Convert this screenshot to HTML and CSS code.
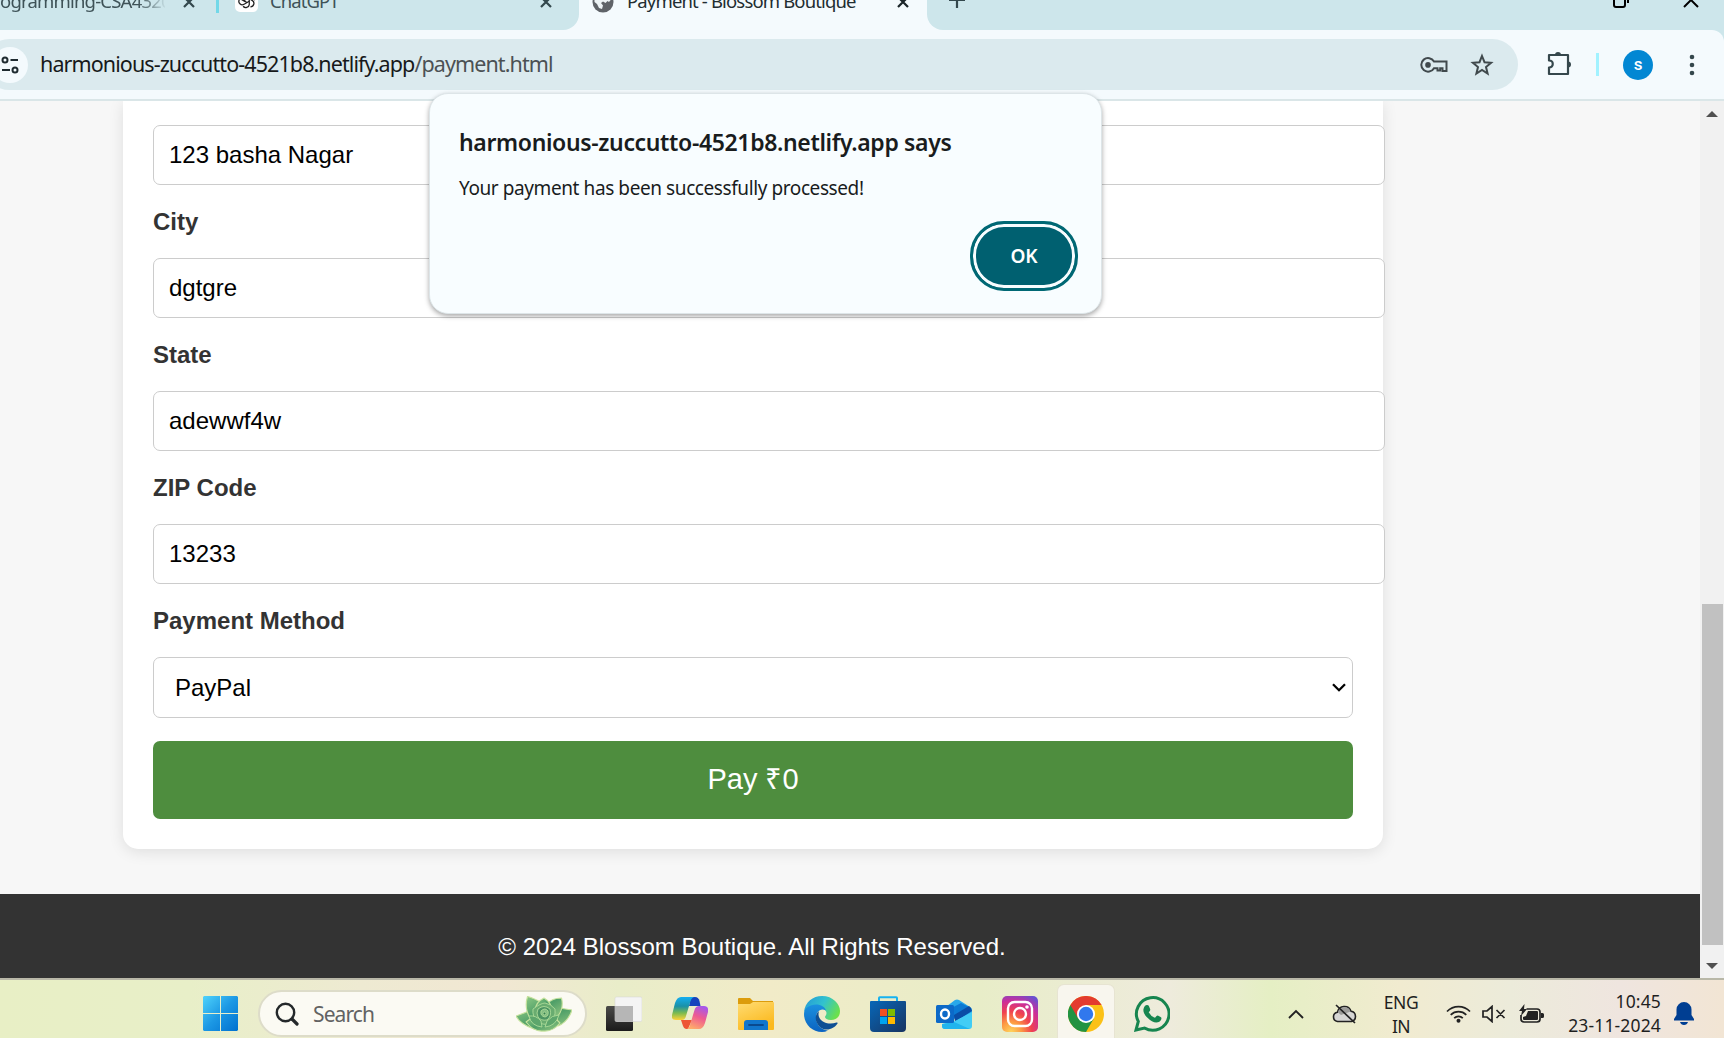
FILE: index.html
```html
<!DOCTYPE html>
<html lang="en">
<head>
<meta charset="utf-8">
<title>Payment - Blossom Boutique</title>
<link rel="stylesheet" href="styles.css">
</head>
<body>
<div class="screen">
  <div class="tabstrip">
    <div class="tabs-left">
      <span class="tab-text tab-fade t1">ogramming-CSA4320(</span>
      <svg class="x x1" width="12" height="12" viewBox="0 0 12 12"><path d="M1 1l10 10M11 1L1 11"/></svg>
      <span class="tab-sep"></span>
      <span class="gpt"><svg width="18" height="18" viewBox="0 0 24 24"><g fill="none" stroke="#222" stroke-width="1.700"><path id="petal" d="M9 13.700V5.800a4.600 4.600 0 0 1 8.600-2.300M9 10.300l6.800-4a4.600 4.600 0 0 1 6 6"/><use href="#petal" transform="rotate(120 12 12)"/><use href="#petal" transform="rotate(240 12 12)"/></g></svg></span>
      <span class="tab-text t2">ChatGPT</span>
      <svg class="x x2" width="12" height="12" viewBox="0 0 12 12"><path d="M1 1l10 10M11 1L1 11"/></svg>
    </div>
    <div class="tab-active">
      <svg width="22" height="22" viewBox="0 0 22 22"><circle cx="11" cy="11" r="10.500" fill="#5f6368"/><path d="M11 4h7.500l1 4-2.500 3-1.500-1-2 2-2.500-1.500L9 12l2 2.500-1 3.500-3-1-2-4-2.500-2V8l3.500-4z" fill="#edf3f5"/></svg>
      <span class="tab-text t3">Payment - Blossom Boutique</span>
      <svg class="x x3" width="12" height="12" viewBox="0 0 12 12"><path d="M1 1l10 10M11 1L1 11"/></svg>
    </div>
    <div class="tabs-right">
      <svg class="plus" width="16" height="16" viewBox="0 0 16 16"><path d="M8 0v16M0 8h16"/></svg>
      <svg class="restore" width="16" height="16" viewBox="0 0 16 16"><rect x="1" y="4" width="11" height="11" rx="2"/><path d="M4 1h8a3 3 0 0 1 3 3v7"/></svg>
      <svg class="winclose" width="16" height="16" viewBox="0 0 16 16"><path d="M1 1l14 14M15 1L1 15"/></svg>
    </div>
  </div>

  <div class="toolbar-wrap"><div class="toolbar">
    <div class="omnibox">
      <span class="siteinfo"><svg width="18" height="18" viewBox="0 0 18 18" fill="none" stroke="#1f2b30" stroke-width="2"><circle cx="4" cy="4" r="2.500"/><path d="M9.500 4H17M1 14h8"/><circle cx="14" cy="14" r="2.500"/></svg></span>
      <span class="url">harmonious-zuccutto-4521b8.netlify.app<span class="path">/payment.html</span></span>
      <svg class="key" width="28" height="18" viewBox="0 0 28 18" fill="none" stroke="#40494c" stroke-width="2"><path d="M14 5.500A6.800 6.800 0 1 0 14 12.200H17.500V14.500H20.200V12.200H22.500V15H26.500V5.500z"/><circle cx="8" cy="8.900" r="2.800" fill="#40494c" stroke="none"/></svg>
      <svg class="star" width="24" height="24" viewBox="0 0 24 24"><path d="M12 3l2.500 6.200 6.600.5-5.100 4.300 1.600 6.500L12 17l-5.600 3.500L8 14 2.900 9.700l6.600-.5z" fill="none" stroke="#40494c" stroke-width="2"/></svg>
    </div>
    <svg class="puzzle" width="25" height="25" viewBox="0 0 25 25"><path d="M2 4h19v19H2v-6.500c5 0 5-7 0-7z" fill="none" stroke="#35474c" stroke-width="2.200" stroke-linejoin="round"/><path d="M8 4a3 3 0 0 1 6 0zM21 10.500a3 3 0 0 1 0 6z" fill="#35474c"/></svg>
    <span class="tool-sep"></span>
    <span class="avatar">s</span>
    <svg class="dots" width="6" height="22" viewBox="0 0 6 22" fill="#35474c"><circle cx="3" cy="3" r="2.300"/><circle cx="3" cy="11" r="2.300"/><circle cx="3" cy="19" r="2.300"/></svg>
  </div></div>

  <div class="viewport">
    <div class="page">
      <main class="card">
        <div class="field">123 basha Nagar</div>
        <div class="label">City</div>
        <div class="field">dgtgre</div>
        <div class="label">State</div>
        <div class="field">adewwf4w</div>
        <div class="label">ZIP Code</div>
        <div class="field">13233</div>
        <div class="label">Payment Method</div>
        <div class="select">PayPal<svg width="14" height="9" viewBox="0 0 14 9"><path d="M1 1.200l6 6 6-6" fill="none" stroke="#000" stroke-width="2.300"/></svg></div>
        <div class="pay">Pay ₹0</div>
      </main>
      <footer class="footer">© 2024 Blossom Boutique. All Rights Reserved.</footer>
    </div>
    <div class="scrollbar">
      <svg width="12" height="6" viewBox="0 0 12 6"><path d="M0 6l6-6 6 6z"/></svg>
      <span class="thumb"></span>
      <svg class="down" width="12" height="6" viewBox="0 0 12 6"><path d="M0 0l6 6 6-6z"/></svg>
    </div>
  </div>

  <div class="taskbar">
    <svg class="win" width="35" height="35" viewBox="0 0 35 35"><defs><linearGradient id="wg" x1="0" y1="0" x2="35" y2="35" gradientUnits="userSpaceOnUse"><stop offset="0" stop-color="#4fd3fb"/><stop offset=".5" stop-color="#1c98e4"/><stop offset="1" stop-color="#0070cf"/></linearGradient></defs><path fill="url(#wg)" d="M1 0h16v17H0V1zM18 0h16l1 1v16H18zM0 18h17v17H1l-1-1zM18 18h17v16l-1 1H18z"/></svg>
    <div class="search">
      <svg class="mag" width="24" height="24" viewBox="0 0 24 24" fill="none" stroke="#24282a"><circle cx="10.500" cy="10.500" r="8.700" stroke-width="2.400"/><path d="M17 17l5 5" stroke-width="3.200" stroke-linecap="round"/></svg>
      <span class="search-text">Search</span>
      <svg class="rose" width="56" height="36" viewBox="0 0 56 36"><defs><linearGradient id="lf" x1="0" y1="0" x2="1" y2="1"><stop offset="0" stop-color="#8cc883"/><stop offset=".5" stop-color="#4f9f68"/><stop offset="1" stop-color="#9bcc84"/></linearGradient></defs><g fill="url(#lf)" stroke="#c6e29d" stroke-width="1.100" stroke-linejoin="round"><path d="M17 13Q9 17 0 20q4 8 18 13zM40 11q8 2 16 3-4 12-14 16z"/><path d="M14 22Q8 12 11.500.5 18 2 26 7l-2 16zM42 20q6-8 3.500-18Q36 2 31 8l2 14z"/><path d="M19 14q1-8 9-12 7 4 8 12l-8 6z"/><path d="M18 20l-8 6q8 10 17 9 10 1 17-8l-7-7z"/></g><g fill="#69ac70" stroke="#addb98" stroke-width=".9"><path d="M17 13q8-6 12-6 6 1 10 6 1 9-5 14-6 3-12-1-6-5-5-13z"/><path d="M13 20q7-1 12 5l1 6q-11-1-13-11zM43 19q-7 0-12 6l-2 6q11-1 14-12z" fill="#5da66c"/><path d="M22 13q6-5 12 0 2 7-3 11-6 1-9-3-2-4 0-8z" fill="#4c9463"/><path d="M25 15q4-4 7 0 1 5-3 6-5-1-4-6z" fill="#83be83"/><circle cx="28.500" cy="17.500" r="1.400" fill="#347f52"/></g></svg>
    </div>
    <div class="apps">
      <span class="app"><svg width="36" height="36" viewBox="0 0 36 36"><defs><linearGradient id="tv" y2="1" x2="0"><stop stop-color="#4a4a48"/><stop offset="1" stop-color="#1b1b1b"/></linearGradient></defs><rect x="0" y="10" width="27" height="25" rx="1.500" fill="url(#tv)"/><rect x="9" y="1" width="27" height="24.500" rx="1.500" fill="#f4f4f4" stroke="#d9d9d9" stroke-width=".6"/><path d="M9 10h18v15H9z" fill="#b6b6b6"/></svg></span>
      <span class="app"><svg width="36" height="36" viewBox="0 0 36 36"><defs><linearGradient id="c1" x2="0" y2="1"><stop stop-color="#15aef1"/><stop offset=".4" stop-color="#1a91a8"/><stop offset=".7" stop-color="#7dbb4f"/><stop offset="1" stop-color="#ffd23a"/></linearGradient><linearGradient id="c2" x1=".7" y1="0" x2=".3" y2="1"><stop stop-color="#a557ec"/><stop offset=".45" stop-color="#ee5a91"/><stop offset="1" stop-color="#ffae69"/></linearGradient></defs><path d="M19 1h4q3.500 0 4.500 4l1 5H17z" fill="#1742bd"/><path d="M9 24h11l-4 9h-2q-2 0-3-3z" fill="#ed5635"/><path d="M9 1h14q-3 0-4.500 4L14 20q-1 4-4 4H4q-5 0-4-5L3 7q2-6 6-6z" fill="url(#c1)"/><path d="M27 33H14q3 0 4-4l4.500-15q1-4 5-4H32q5 0 4 6l-3 11q-2 6-6 6z" fill="url(#c2)"/></svg></span>
      <span class="app"><svg width="36" height="36" viewBox="0 0 36 36"><defs><linearGradient id="fd" x2=".5" y2="1"><stop stop-color="#ffdc73"/><stop offset="1" stop-color="#fbb91e"/></linearGradient></defs><path d="M0 3q0-1 1-1h11l3 3h20v6H0z" fill="#dc9c0c"/><path d="M0 8h12l3-2h20q1 0 1 1v26q0 1-1 1H1q-1 0-1-1z" fill="url(#fd)"/><path d="M6 34V27q0-3 3-3h18q3 0 3 3v7z" fill="#1176cc"/><path d="M11 29h14" stroke="#0a4a8f" stroke-width="1.800" stroke-linecap="round"/></svg></span>
      <span class="app"><svg width="36" height="36" viewBox="0 0 36 36"><defs><linearGradient id="e1" x1="0" y1=".2" x2="1" y2=".6"><stop stop-color="#249cd8"/><stop offset=".5" stop-color="#32c2ce"/><stop offset="1" stop-color="#6ce14a"/></linearGradient><linearGradient id="e2" x2="0" y2="1"><stop stop-color="#1b91df"/><stop offset="1" stop-color="#0b63c1"/></linearGradient></defs><path d="M0 16C1 6 9 0 18 0c11 0 18 8 18 15 0 6-4 9-9 9-4 0-6-1.500-6-3 0-1 1.500-1.500 1.500-4 0-3-4-5.500-9-5.500C6 11.500 2 13 0 16z" fill="url(#e1)"/><path d="M0 18c0-6 6-9.500 12-9.500 5 0 9 2.500 10 6-6-3-10 2-10 7 0 8 7 13 12 13-2 1-4 1.500-6 1.500C8 36 0 28 0 18z" fill="url(#e2)"/><path d="M15 15c-5 4-4 12 1 16 6 5 14 2 17.500-3.500.6-.9-.3-1.300-1-1C26 29 18 27 15.500 22c-1.500-3-1-5-.5-7z" fill="#0e4f94"/></svg></span>
      <span class="app"><svg width="36" height="36" viewBox="0 0 36 36"><defs><linearGradient id="st" x2="1" y2="1"><stop stop-color="#0767b8"/><stop offset="1" stop-color="#183461"/></linearGradient></defs><path d="M9 8V2q0-.8.800-.8h16.400q.8 0 .8.800v6" fill="none" stroke="#17b2f0" stroke-width="2"/><path d="M0 6q0-1 1-1h34q1 0 1 1v26q0 4-4 4H4q-4 0-4-4z" fill="url(#st)"/><path d="M10 13h7v7h-7z" fill="#f25022"/><path d="M18 13h7v7h-7z" fill="#7fba00"/><path d="M10 21h7v7h-7z" fill="#00a4ef"/><path d="M18 21h7v7h-7z" fill="#ffb900"/></svg></span>
      <span class="app"><svg width="36" height="36" viewBox="0 0 36 36"><path d="M7 13L19 4q2-1.200 4 0l11 7q2 1 2 3v8H7z" fill="#28a8ea"/><path d="M8 16l17-9 9 4.500L18 23z" fill="#0b79d3"/><path d="M18 19l15-9q3 2 3 5l-17 11z" fill="#0a4da6"/><path d="M6 28l13-3 17-9v14q0 3-3 3H9q-3 0-3-3z" fill="#42cdf5"/><path d="M6 28l12-2 16 7H9q-3 0-3-3z" fill="#20b5ee"/><rect x="0" y="9" width="18" height="18" rx="1.500" fill="#0c69c8"/><ellipse cx="9" cy="18" rx="4" ry="4.500" fill="none" stroke="#fff" stroke-width="2.400"/></svg></span>
      <span class="app"><svg width="36" height="36" viewBox="0 0 36 36"><defs><radialGradient id="ig" cx=".25" cy="1" r="1.150"><stop stop-color="#ffd55c"/><stop offset=".25" stop-color="#fd9a43"/><stop offset=".5" stop-color="#f0424f"/><stop offset=".75" stop-color="#cb2e9a"/><stop offset="1" stop-color="#6850d0"/></radialGradient></defs><rect width="36" height="36" rx="5" fill="url(#ig)"/><g fill="none" stroke="#fff" stroke-width="2.400"><rect x="6" y="6" width="24" height="24" rx="6.500"/><circle cx="18" cy="18" r="6"/></g><circle cx="25" cy="11" r="1.800" fill="#fff"/></svg></span>
      <span class="app active"><svg width="36" height="36" viewBox="0 0 36 36"><circle cx="18" cy="18" r="18" fill="#fbc117"/><path d="M18 18L2.400 9A18 18 0 0 0 18 36l7.800-13.500z" fill="#229342"/><path d="M18 9h15.600A18 18 0 0 0 2.400 9l7.800 13.500z" fill="#e33b2e"/><circle cx="18" cy="18" r="9" fill="#fff"/><circle cx="18" cy="18" r="7.200" fill="#3178ed"/></svg></span>
      <span class="app"><svg width="36" height="36" viewBox="0 0 36 36"><path d="M2 34l2.300-8.500A16.300 16.300 0 1 1 10.500 32z" fill="none" stroke="#16854f" stroke-width="3"/><path d="M9.500 13q1-4 3.500-4 1.500 0 2 1.300l1.200 3q.4 1-1.500 3 2 4 6.300 5.500 2-2.400 2.800-2.200l3.200 1.700q.8.500.2 2.200-1.200 3-5 3-4 0-9-5-4.500-4.500-3.700-8.500z" fill="#16854f"/></svg></span>
    </div>
    <div class="tray">
      <svg class="chev" width="16" height="10" viewBox="0 0 16 10"><path d="M1 9l7-7 7 7" fill="none" stroke="#222" stroke-width="1.900"/></svg>
      <svg class="cloud" width="25" height="20" viewBox="0 0 25 20"><path d="M5.500 17.500a4.700 4.700 0 0 1 0-9.300A7 7 0 0 1 19 7.300a5.200 5.200 0 0 1 .5 10.200z" fill="#d6d6d4" stroke="#222" stroke-width="1.600"/><path d="M6 8.500a6.500 6.500 0 0 1 12.500-1L9 11z" fill="#9c9c9a"/><path d="M4 1l19 18" stroke="#222" stroke-width="1.700"/></svg>
      <div class="lang">ENG<br>IN</div>
      <svg class="wifi" width="25" height="18" viewBox="0 0 25 18" fill="none" stroke="#222" stroke-width="1.700"><path d="M1 6.500a16 16 0 0 1 23 0M4.700 9.900a11 11 0 0 1 15.600 0M8.200 13.200a6 6 0 0 1 8.600 0"/><circle cx="12.500" cy="15.700" r="2" fill="#222" stroke="none"/></svg>
      <svg class="vol" width="24" height="18" viewBox="0 0 24 18" fill="none" stroke="#222" stroke-width="1.700"><path d="M1 6h4l5-4.500v15L5 12H1zM14.500 5l8 8M22.500 5l-8 8"/></svg>
      <svg class="bat" width="25" height="20" viewBox="0 0 25 20"><path d="M7.500 5H18q3 0 3 3v7q0 3-3 3H5q-3 0-3-3v-4" fill="none" stroke="#222" stroke-width="1.700"/><path d="M9 7h9q1 0 1 1v7q0 1-1 1H5q-1 0-1-1v-2l3-1z" fill="#222"/><path d="M22 9h1.500q1.500 0 1.500 1.500v2q0 1.500-1.500 1.500H22zM5.500 0L0 7h3l-1 5 6-7H5z" fill="#222"/></svg>
      <div class="clock">10:45<br>23-11-2024</div>
      <svg class="bell" width="20" height="23" viewBox="0 0 20 23" fill="#003e92"><path d="M10 0a7.500 7.500 0 0 1 7.500 7.500V13l2.500 4v1.500H0V17l2.500-4V7.500A7.500 7.500 0 0 1 10 0zM6 20h8q-1 3-4 3t-4-3z"/></svg>
    </div>
  </div>

  <div class="dialog">
    <div class="dialog-title">harmonious-zuccutto-4521b8.netlify.app says</div>
    <div class="dialog-body">Your payment has been successfully processed!</div>
    <div class="ok">OK</div>
  </div>
</div>
</body>
</html>
```

FILE: styles.css
```css
* { box-sizing: border-box; }
body { margin: 0; }
svg { display: block; flex: none; }
.screen {
  position: relative;
  width: 1724px;
  height: 1038px;
  overflow: hidden;
  display: flex;
  flex-direction: column;
  font-family: "Noto Sans", "Open Sans", sans-serif;
}

/* Tab strip, scrolled partly above the top edge */
.tabstrip {
  flex: none;
  display: flex;
  height: 56px;
  margin-top: -26px;
  background: #f4fafd;
}
.tabs-left, .tabs-right, .tab-active { display: flex; align-items: center; background: #cde6eb; }
.tabs-left { width: 579px; border-bottom-right-radius: 16px; }
.tab-active { width: 348px; background: #f4fafd; padding-left: 13px; }
.tabs-right { width: 797px; border-bottom-left-radius: 16px; }
.tab-text { flex: none; white-space: nowrap; font-size: 18.500px; color: #3e5257; line-height: 28px; margin-top: -2px; }
.t1 { width: 165px; overflow: hidden; letter-spacing: -0.800px; }
.tab-fade { -webkit-mask-image: linear-gradient(90deg, #000 138px, transparent 167px); mask-image: linear-gradient(90deg, #000 138px, transparent 167px); }
.t2 { width: 270px; margin-left: 12px; letter-spacing: -0.950px; }
.t3 { width: 270px; margin-left: 13px; color: #222d31; letter-spacing: -0.850px; }
.x path, .plus path { fill: none; stroke: #33484d; stroke-width: 2.200; }
.x3 path { stroke: #1b2529; }
.x1 { margin-left: 18px; }
.tab-sep { width: 3px; height: 22px; margin-left: 21px; background: #72d8e8; }
.gpt { width: 23px; height: 24px; margin-left: 16px; border-radius: 5px; background: #fff; display: flex; align-items: center; justify-content: center; margin-top: -4px; }
.plus { margin-left: 22px; margin-top: -4px; }
.restore, .winclose { fill: none; stroke: #000; stroke-width: 2; margin-top: -5px; }
.restore { margin-left: 648px; }
.winclose { margin-left: 54px; }

/* Address bar */
.toolbar-wrap { flex: none; background: #cde6eb; }
.toolbar {
  height: 71px;
  display: flex;
  align-items: center;
  background: #f4fafd;
  border-bottom: 2px solid #dae6e8;
  border-top-right-radius: 12px;
}
.omnibox {
  width: 1534px;
  height: 51px;
  margin-left: -16px;
  padding-left: 8px;
  border-radius: 26px;
  background: #dbeaee;
  display: flex;
  align-items: center;
}
.siteinfo { width: 36px; height: 36px; border-radius: 18px; background: #f4fafd; display: flex; align-items: center; padding-left: 9px; }
.url { width: 1380px; margin-left: 12px; margin-top: -3px; font-size: 21.500px; letter-spacing: -0.910px; color: #17191a; white-space: nowrap; }
.path { color: #4b5154; }
.star { margin-left: 22px; }
.puzzle { margin-left: 29px; margin-top: -3px; }
.tool-sep { width: 3px; height: 23px; margin-left: 24px; background: #a2f2ff; }
.avatar { width: 30px; height: 30px; margin-left: 24px; border-radius: 50%; background: #0287d3; color: #fff; font: 500 17px/28px Roboto, sans-serif; text-align: center; }
.dots { margin-left: 36px; }

/* Web page */
.viewport { flex: none; height: 877px; display: flex; overflow: hidden; background: #f7f7f7; font-family: "Liberation Sans", Arial, sans-serif; }
.page { width: 1700px; }
.card {
  width: 1260px;
  height: 748px;
  margin-left: 123px;
  padding: 24px 30px 0;
  background: #fff;
  border-radius: 0 0 15px 15px;
  box-shadow: 0 3px 15px rgba(0, 0, 0, .1);
  font-size: 24px;
  color: #000;
}
.field, .select { height: 60px; border: 1px solid #ccc; border-radius: 7px; background: #fff; line-height: 58px; padding-left: 15px; }
.field { width: 1232px; }
.label { height: 73px; line-height: 73px; font-weight: 700; color: #333; }
.select { width: 1200px; height: 61px; display: flex; align-items: center; justify-content: space-between; padding: 0 6px 0 21px; }
.pay { width: 1200px; height: 78px; margin-top: 23px; border-radius: 7px; background: #4e8d3e; color: #fff; font-size: 29px; line-height: 76px; text-align: center; }
.footer { height: 120px; margin-top: 45px; padding: 36px 196px 0 0; background: #333; color: #fff; font-size: 24px; line-height: 34px; text-align: center; }
.scrollbar { width: 24px; background: #f1f1f1; display: flex; flex-direction: column; align-items: center; padding-top: 10px; fill: #505050; }
.thumb { width: 21px; height: 341px; margin-top: 487px; margin-left: 1px; background: #c1c1c1; }
.down { margin-top: 18px; }

/* Taskbar */
.taskbar {
  flex: none;
  height: 60px;
  display: flex;
  align-items: center;
  padding-top: 11px;
  border-top: 2px solid #b9b8a8;
  padding-bottom: 2px;
  background: linear-gradient(90deg, #e8efc5 0, #e8efc8 190px, #eeead2 360px, #f1e7d3 500px, #e9edc9 620px, #f1ebc8 770px, #e8edc8 980px, #eeebdc 1170px, #e5efc4 1270px, #f1ebd0 1400px, #ecebda 1510px, #efe5df 1620px, #f2e5d4 1724px);
}
.win { margin-left: 203px; }
.search { width: 329px; height: 47px; margin-left: 20px; border: 2px solid #dddcc9; border-radius: 24px; background: #fbfaf3; display: flex; align-items: center; padding-left: 15px; }
.search-text { width: 203px; margin-left: 14px; font-size: 21px; color: #626262; letter-spacing: -0.900px; }
.apps { display: flex; margin-left: 9px; gap: 10px; }
.app { width: 56px; height: 58px; display: flex; justify-content: center; align-items: center; margin-top: 1px; }
.app.active { background: #f8f6ee; border-radius: 6px; box-shadow: 0 0 0 1px #e7e4d2; }
.tray { display: flex; align-items: center; margin-left: 108px; font-size: 17.500px; line-height: 24px; color: #1f1f1f; }
.cloud { margin-left: 28px; }
.lang { width: 50px; margin-left: 19px; text-align: center; letter-spacing: -0.500px; }
.wifi { margin-left: 20px; }
.vol { margin-left: 11px; }
.bat { margin-left: 13px; }
.clock { width: 102px; margin-left: 15px; text-align: right; letter-spacing: 0.150px; margin-top: -2px; }
.bell { margin-left: 13px; }

/* Alert floating over the page */
.dialog {
  position: absolute;
  left: 429px;
  top: 93px;
  width: 673px;
  height: 221px;
  padding: 32px 23px 0 29px;
  border: 1px solid #dde5e8;
  border-radius: 19px;
  background: #f8fdff;
  box-shadow: 0 2px 5px rgba(0, 0, 0, .35);
  color: #191c1d;
}
.dialog-title { font-size: 23px; font-weight: 600; line-height: 32px; letter-spacing: -0.350px; white-space: nowrap; }
.dialog-body { font-size: 19px; line-height: 28px; margin-top: 16px; letter-spacing: -0.410px; white-space: nowrap; }
.ok { width: 108px; height: 70px; margin: 19px 0 0 auto; border: 3px solid #006874; border-radius: 34px; background: #006070; box-shadow: inset 0 0 0 3px #f8fdff; color: #fff; font-size: 19px; font-weight: 600; line-height: 64px; text-align: center; }
```
